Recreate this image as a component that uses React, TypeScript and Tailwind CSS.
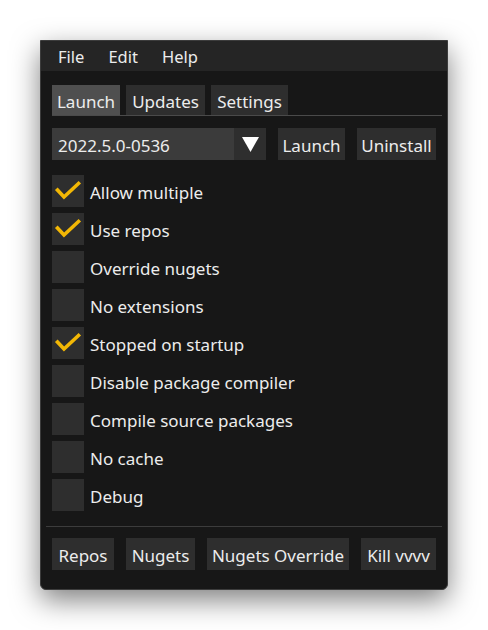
import React from "react";

const options: { label: string; checked: boolean }[] = [
  { label: "Allow multiple", checked: true },
  { label: "Use repos", checked: true },
  { label: "Override nugets", checked: false },
  { label: "No extensions", checked: false },
  { label: "Stopped on startup", checked: true },
  { label: "Disable package compiler", checked: false },
  { label: "Compile source packages", checked: false },
  { label: "No cache", checked: false },
  { label: "Debug", checked: false },
];

function Check() {
  return (
    <svg width="32" height="32" viewBox="0 0 32 32">
      <path d="M5.5 15 L12 22 L26.5 8.5" fill="none" stroke="#f2b705" strokeWidth="3.6" strokeLinecap="square" strokeLinejoin="miter" />
    </svg>
  );
}

function Btn({ children, w }: { children: React.ReactNode; w: string }) {
  return <div className={`h-[32px] ${w} flex items-center justify-center pt-[2px] bg-[#2e2e2e] whitespace-nowrap`}>{children}</div>;
}

export default function App() {
  return (
    <div className="w-[488px] h-[630px] bg-white pt-[40px] pl-[40px]" style={{ fontFamily: '"Noto Sans", sans-serif' }}>
      <div className="w-[408px] h-[550px] bg-[#171717] border border-[#3c3c3c] rounded-b-[6px] shadow-[0_10px_28px_rgba(0,0,0,0.5)] text-[#ececec] text-[17px] leading-none overflow-hidden">
        <div className="h-[30px] bg-[#252525] flex items-center gap-[24px] pl-[17px] pt-[2px] text-[16.5px]">
          <span>File</span>
          <span>Edit</span>
          <span>Help</span>
        </div>
        <div className="px-[11px] pt-[14px]">
          <div className="flex gap-[6px] border-b border-[#4a4a4a] mr-[-6px]">
            <div className="h-[30px] w-[68px] flex items-center justify-center pt-[2px] bg-[#4f4f4f]">Launch</div>
            <div className="h-[30px] w-[79px] flex items-center justify-center pt-[2px] bg-[#2e2e2e]">Updates</div>
            <div className="h-[30px] w-[77px] flex items-center justify-center pt-[2px] bg-[#2e2e2e]">Settings</div>
          </div>
          <div className="flex mt-[12px] gap-[12px]">
            <div className="flex w-[214px] h-[32px]">
              <div className="flex-1 bg-[#3b3b3b] px-[6px] pt-[2px] flex items-center">2022.5.0-0536</div>
              <div className="w-[32px] bg-[#2e2e2e] flex items-center justify-center">
                <svg width="17" height="15" viewBox="0 0 17 15"><path d="M0 0 H17 L8.5 15 Z" fill="#ffffff" /></svg>
              </div>
            </div>
            <Btn w="w-[67px]">Launch</Btn>
            <Btn w="w-[79px]">Uninstall</Btn>
          </div>
          <div className="flex flex-col gap-[6px] mt-[15px]">
            {options.map((o) => (
              <div key={o.label} className="flex items-center gap-[6px] h-[32px]">
                <div className="w-[32px] h-[32px] bg-[#2e2e2e]">{o.checked && <Check />}</div>
                <span className="pt-[3px]">{o.label}</span>
              </div>
            ))}
          </div>
          <div className="h-px bg-[#3c3c3c] mt-[15px] ml-[-6px] mr-[-6px]" />
          <div className="flex gap-[12px] mt-[11px]">
            <Btn w="w-[62px]">Repos</Btn>
            <Btn w="w-[69px]">Nugets</Btn>
            <Btn w="w-[142px]">Nugets Override</Btn>
            <Btn w="w-[75px]">Kill vvvv</Btn>
          </div>
        </div>
      </div>
    </div>
  );
}
